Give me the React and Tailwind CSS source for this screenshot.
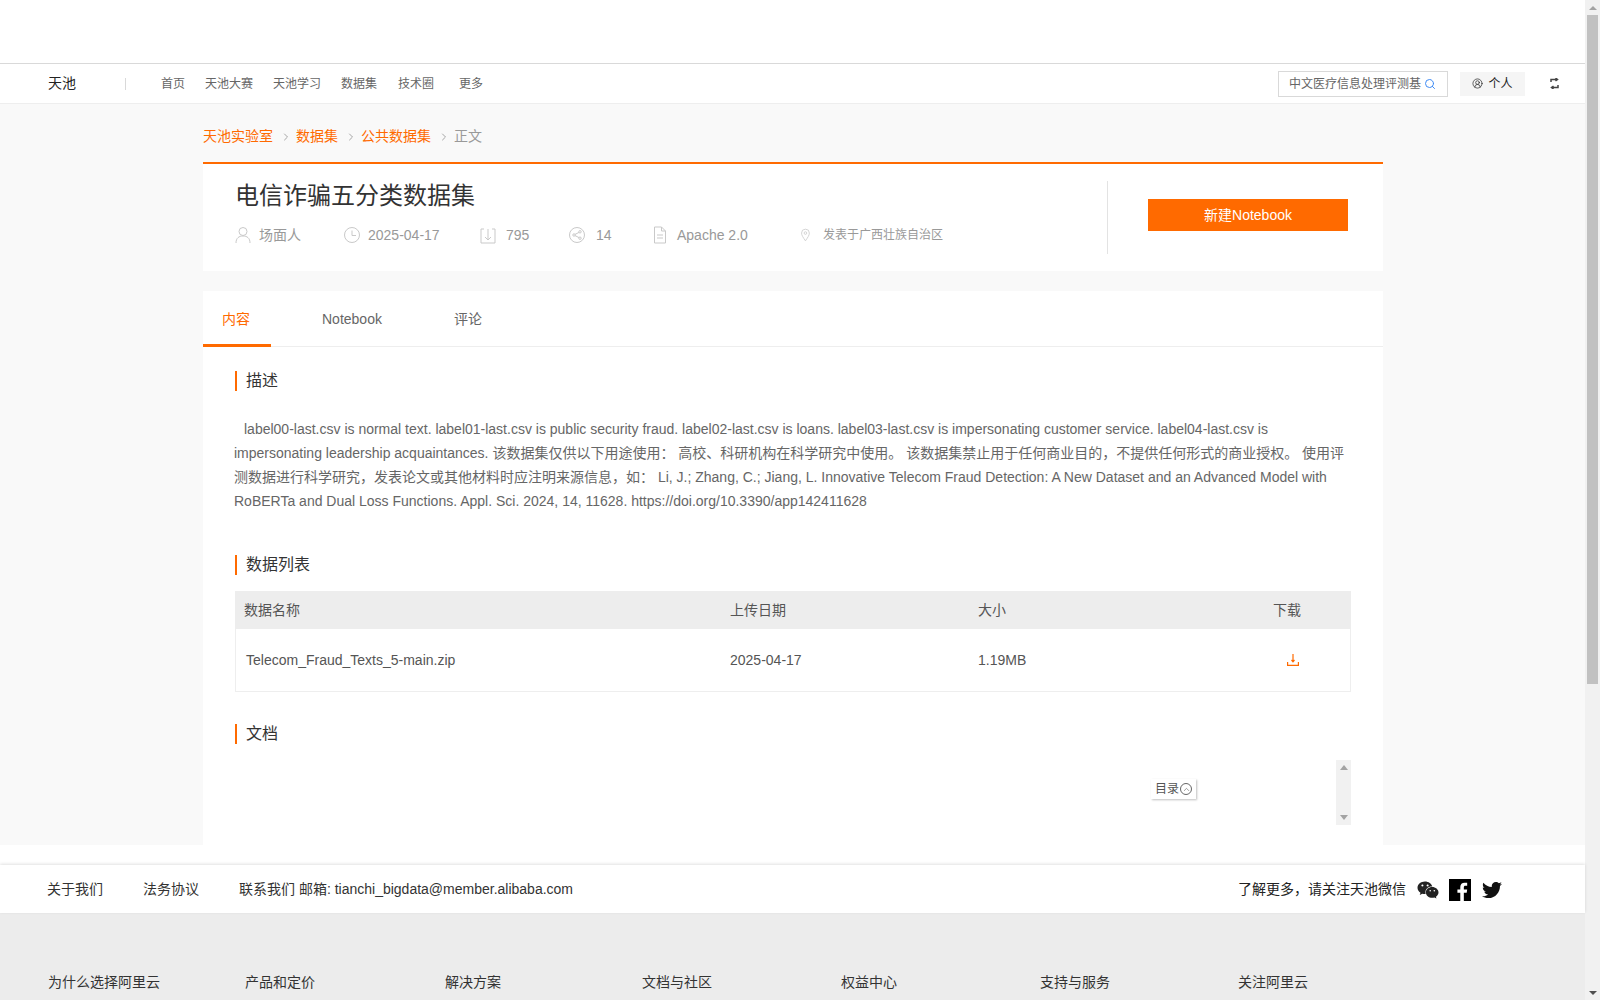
import React from "react";
import { Search, ChevronRight, CircleUserRound, ChevronUp } from "lucide-react";
import { FaTwitter, FaWeixin } from "react-icons/fa";

const Title = ({ children, cls }) => (
  <div className={`flex items-center h-5 border-l-[2px] border-[#ff6a00] pl-[9px] text-base leading-5 text-[#333] ${cls}`}>{children}</div>
);

const Gi = ({ children, w = 18 }) => (
  <svg width={w} height={18} viewBox="0 0 18 18" fill="none" stroke="#c9c9c9" strokeWidth="1" className="shrink-0">{children}</svg>
);

const Crumb = () => <ChevronRight size={12} strokeWidth={1.75} className="text-[#999] ml-[7px] mr-[4px] mt-[2px]" />;

export default function App() {
  return (
    <div className="h-screen overflow-hidden flex [font-family:'Liberation_Sans','Noto_Sans_CJK_SC',sans-serif] text-[#666]">
      <div className="w-[1585px] shrink-0 flex flex-col bg-[#f9f9f9]">
        <div className="h-[63px] bg-white shrink-0" />
        <header className="h-[41px] shrink-0 bg-white border-t border-b border-t-[#d9d9d9] border-b-[#eeeeee] flex items-center text-xs">
          <span className="ml-[48px] -mt-[2px] text-sm text-[#222] w-[77px]">天池</span>
          <span className="w-px h-3 bg-[#d9d9d9]" />
          <nav className="flex ml-[35px] text-[#666]">
            <span className="w-[44px]">首页</span>
            <span className="w-[68px]">天池大赛</span>
            <span className="w-[68px]">天池学习</span>
            <span className="w-[57px]">数据集</span>
            <span className="w-[61px]">技术圈</span>
            <span>更多</span>
          </nav>
          <div className="ml-auto w-[170px] h-[26px] border border-[#d9d9d9] flex items-center justify-between pl-[10px] pr-[11px]">
            <span className="text-[#666] whitespace-nowrap w-[132px]">中文医疗信息处理评测基</span>
            <Search size={12} strokeWidth={2} className="text-[#3f8cf5]" />
          </div>
          <div className="ml-[12px] w-[65px] h-6 bg-[#f5f5f5] flex items-center justify-center gap-[5px] text-[#222]">
            <CircleUserRound size={11} strokeWidth={1.5} />
            <span>个人</span>
          </div>
          <svg width="11" height="11" viewBox="0 0 11 11" fill="none" stroke="#444" strokeWidth="1.5" className="ml-[24px] mr-[25px]">
            <path d="M2 4V1.500H8M6.500 0 8.500 1.500 6.500 3M9 7v2.500H3M4.500 8 2.500 9.500 4.500 11" />
          </svg>
        </header>

        <main className="w-[1180px] ml-[203px] flex-1 flex flex-col min-h-0">
          <div className="h-[58px] flex items-center text-sm shrink-0 pt-[5px]">
            <span className="text-[#ff6a00]">天池实验室</span>
            <Crumb />
            <span className="text-[#ff6a00]">数据集</span>
            <Crumb />
            <span className="text-[#ff6a00]">公共数据集</span>
            <Crumb />
            <span className="text-[#999]">正文</span>
          </div>

          <section className="h-[109px] shrink-0 bg-white border-t-2 border-[#ff6a00] flex">
            <div className="w-[904px] pl-[32px] shrink-0">
              <h1 className="text-2xl leading-8 mt-[16px] font-normal text-[#333]">电信诈骗五分类数据集</h1>
              <div className="flex items-center mt-[11px] -ml-px text-sm text-[#999] h-[24px]">
                <Gi><circle cx="9" cy="5.500" r="4" /><path d="M2 17c0-5 3-7 7-7s7 2 7 7" /></Gi>
                <span className="ml-[7px] w-[84px]">场面人</span>
                <Gi><circle cx="9" cy="9" r="7.500" /><path d="M9 4.500V9.500H13" /></Gi>
                <span className="ml-[7px] w-[111px]">2025-04-17</span>
                <Gi><path d="M5 3H2v14h14V3h-3M9 3v11M6 11l3 3 3-3" /></Gi>
                <span className="ml-[9px] w-[62px]">795</span>
                <Gi><circle cx="9" cy="9" r="7.500" /><circle cx="6" cy="9" r="1.200" /><circle cx="12" cy="5.800" r="1.200" /><circle cx="12" cy="12.200" r="1.200" /><path d="M7 8.400 11 6.400M7 9.600l4 2" /></Gi>
                <span className="ml-[10px] w-[55px]">14</span>
                <Gi><path d="M3.500 1h7l4 4v12h-11zM10.500 1v4h4M6 9h6M6 12h6" /></Gi>
                <span className="ml-[8px] w-[123px]">Apache 2.0</span>
                <Gi w={14}><path d="M7 16.500C4 12 2 9.500 2 6.500a5 5 0 0 1 10 0c0 3-2 5.500-5 10z" /><circle cx="7" cy="6.500" r="1.700" /></Gi>
                <span className="ml-[9px] text-xs">发表于广西壮族自治区</span>
              </div>
            </div>
            <div className="w-px h-[73px] bg-[#e3e3e3] mt-[17px]" />
            <div className="ml-[40px] mt-[35px]">
              <div className="w-[200px] h-8 bg-[#ff6a00] text-white text-sm flex items-center justify-center">新建Notebook</div>
            </div>
          </section>

          <section className="mt-[20px] bg-white flex-1 min-h-0 flex flex-col">
            <div className="h-[56px] shrink-0 border-b border-[#eeeeee] flex text-sm">
              <div className="w-[68px] h-[56px] border-b-[3px] border-[#ff6a00] text-[#ff6a00] flex items-center justify-center pt-[3px] pr-[2px]">内容</div>
              <div className="ml-[51px] h-[56px] flex items-center text-[#666]">Notebook</div>
              <div className="ml-[72px] h-[56px] flex items-center text-[#666]">评论</div>
            </div>

            <div className="px-[32px] flex-1 relative">
              <Title cls="mt-[24px]">描述</Title>
              <p className="mt-[26px] -ml-px text-sm leading-[24px] text-[#666] indent-[10px] w-[1118px]">
                label00-last.csv is normal text. label01-last.csv is public security fraud. label02-last.csv is loans. label03-last.csv is impersonating customer service. label04-last.csv is impersonating leadership acquaintances. 该数据集仅供以下用途使用： 高校、科研机构在科学研究中使用。 该数据集禁止用于任何商业目的，不提供任何形式的商业授权。 使用评测数据进行科学研究，发表论文或其他材料时应注明来源信息，如： Li, J.; Zhang, C.; Jiang, L. Innovative Telecom Fraud Detection: A New Dataset and an Advanced Model with RoBERTa and Dual Loss Functions. Appl. Sci. 2024, 14, 11628. https://doi.org/10.3390/app142411628
              </p>

              <Title cls="mt-[42px]">数据列表</Title>
              <div className="mt-[16px] w-[1116px] text-sm">
                <div className="h-[38px] bg-[#ededed] flex items-center text-[#555]">
                  <span className="w-[495px] pl-[9px]">数据名称</span>
                  <span className="w-[248px]">上传日期</span>
                  <span className="w-[295px]">大小</span>
                  <span>下载</span>
                </div>
                <div className="h-[63px] border border-t-0 border-[#eeeeee] flex items-center text-[#555]">
                  <span className="w-[494px] pl-[10px]">Telecom_Fraud_Texts_5-main.zip</span>
                  <span className="w-[248px]">2025-04-17</span>
                  <span className="w-[309px]">1.19MB</span>
                  <svg width="12" height="12" viewBox="0 0 12 12" fill="none" stroke="#ff6a00" strokeWidth="1.200">
                    <path d="M6 0v7.500M4.500 6 6 7.800 7.500 6M.600 8v3.400h10.800V8" />
                  </svg>
                </div>
              </div>

              <Title cls="mt-[32px]">文档</Title>

              <div className="absolute left-[948px] top-[432px] w-[45px] h-[20px] bg-white shadow-[1px_1px_2px_rgba(0,0,0,0.25)] flex items-center justify-center gap-[1px] text-xs text-[#555]">
                目录
                <span className="w-3 h-3 rounded-full border border-[#666] flex items-center justify-center">
                  <ChevronUp size={9} strokeWidth={1.5} />
                </span>
              </div>
              <div className="absolute left-[1133px] top-[413px] w-[15px] h-[65px] bg-[#f1f1f1] flex flex-col justify-between items-center py-[5px]">
                <span className="w-0 h-0 border-x-[4px] border-x-transparent border-b-[5px] border-b-[#a3a3a3]" />
                <span className="w-0 h-0 border-x-[4px] border-x-transparent border-t-[5px] border-t-[#a3a3a3]" />
              </div>
            </div>
          </section>
        </main>

        <div className="h-[20px] bg-white shrink-0" />
        <footer className="shrink-0">
          <div className="h-[48px] bg-white flex items-center text-sm text-[#333] shadow-[0_-1px_3px_rgba(0,0,0,0.12)] relative">
            <span className="ml-[47px]">关于我们</span>
            <span className="ml-[40px]">法务协议</span>
            <span className="ml-[40px]">联系我们 邮箱: tianchi_bigdata@member.alibaba.com</span>
            <span className="ml-auto text-[#222]">了解更多，请关注天池微信</span>
            <FaWeixin size={22} className="ml-[11px] mt-[2px] text-[#222]" />
            <svg width="22" height="22" viewBox="0 0 23 23" className="ml-[10px] mt-[2px]">
              <rect width="23" height="23" fill="#000" />
              <path d="M15.500 23v-8.500h3l.5-3.500h-3.500V8.800c0-1 .4-1.700 1.800-1.700H19V4c-.5-.1-1.500-.2-2.700-.2-2.700 0-4.500 1.600-4.500 4.500V11H8.800v3.500h3V23z" fill="#fff" />
            </svg>
            <FaTwitter size={20} className="ml-[11px] mr-[83px] mt-[1px] text-[#111]" />
          </div>
          <div className="h-[87px] bg-[#ececec] pt-[59px] text-sm text-[#333] flex pl-[48px]">
            <span className="w-[197px]">为什么选择阿里云</span>
            <span className="w-[200px]">产品和定价</span>
            <span className="w-[197px]">解决方案</span>
            <span className="w-[199px]">文档与社区</span>
            <span className="w-[199px]">权益中心</span>
            <span className="w-[198px]">支持与服务</span>
            <span>关注阿里云</span>
          </div>
        </footer>
      </div>

      <div className="w-[15px] shrink-0 bg-[#f1f1f1] flex flex-col items-center">
        <div className="h-[15px] flex items-center justify-center shrink-0">
          <span className="w-0 h-0 border-x-[4px] border-x-transparent border-b-[4px] border-b-[#a3a3a3]" />
        </div>
        <div className="w-[11px] h-[669px] bg-[#c1c1c1] shrink-0" />
        <div className="mt-auto h-[15px] flex items-center justify-center shrink-0">
          <span className="w-0 h-0 border-x-[4px] border-x-transparent border-t-[4px] border-t-[#505050]" />
        </div>
      </div>
    </div>
  );
}
